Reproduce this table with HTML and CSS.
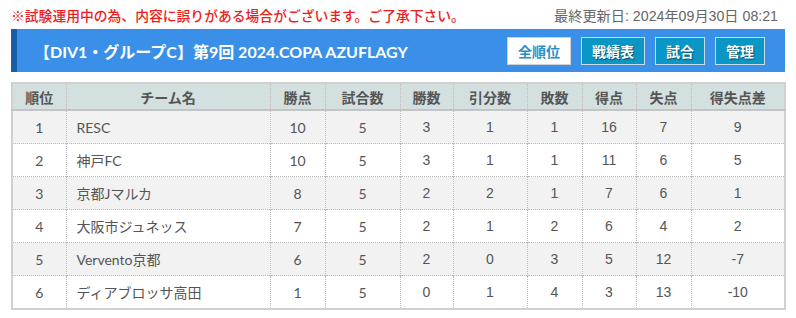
FILE: index.html
```html
<!DOCTYPE html>
<html lang="ja">
<head>
<meta charset="utf-8">
<link rel="stylesheet" href="styles.css">
</head>
<body>
<div class="page">
  <div class="topline">
    <span class="notice">※試験運用中の為、内容に誤りがある場合がございます。ご了承下さい。</span>
    <span class="updated">最終更新日: 2024年09月30日 08:21</span>
  </div>
  <div class="titlebar">
    <h1 class="title">【DIV1・グループC】第9回 2024.COPA AZUFLAGY</h1>
    <div class="btns">
      <a class="btn btn-active">全順位</a>
      <a class="btn">戦績表</a>
      <a class="btn">試合</a>
      <a class="btn">管理</a>
    </div>
  </div>
  <table class="standings">
    <colgroup>
      <col class="c1"><col class="c2"><col class="c3"><col class="c4"><col class="c5">
      <col class="c6"><col class="c7"><col class="c8"><col class="c9"><col class="c10">
    </colgroup>
    <thead>
      <tr><th>順位</th><th>チーム名</th><th>勝点</th><th>試合数</th><th>勝数</th><th>引分数</th><th>敗数</th><th>得点</th><th>失点</th><th>得失点差</th></tr>
    </thead>
    <tbody>
      <tr><td class="la">1</td><td class="name">RESC</td><td class="la">10</td><td class="la">5</td><td>3</td><td>1</td><td>1</td><td>16</td><td>7</td><td>9</td></tr>
      <tr><td class="la">2</td><td class="name">神戸FC</td><td class="la">10</td><td class="la">5</td><td>3</td><td>1</td><td>1</td><td>11</td><td>6</td><td>5</td></tr>
      <tr><td class="la">3</td><td class="name">京都Jマルカ</td><td class="la">8</td><td class="la">5</td><td>2</td><td>2</td><td>1</td><td>7</td><td>6</td><td>1</td></tr>
      <tr><td class="la">4</td><td class="name">大阪市ジュネッス</td><td class="la">7</td><td class="la">5</td><td>2</td><td>1</td><td>2</td><td>6</td><td>4</td><td>2</td></tr>
      <tr><td class="la">5</td><td class="name">Vervento京都</td><td class="la">6</td><td class="la">5</td><td>2</td><td>0</td><td>3</td><td>5</td><td>12</td><td>-7</td></tr>
      <tr><td class="la">6</td><td class="name">ディアブロッサ高田</td><td class="la">1</td><td class="la">5</td><td>0</td><td>1</td><td>4</td><td>3</td><td>13</td><td>-10</td></tr>
    </tbody>
  </table>
</div>
</body>
</html>
```
FILE: styles.css
```css
html, body {
  margin: 0;
  padding: 0;
  background: #fff;
}
body {
  font-family: Lato, "Noto Sans CJK JP", sans-serif;
  color: #555;
}
.page {
  padding: 0 11px;
}
.topline {
  display: flex;
  justify-content: space-between;
  align-items: center;
  height: 29px;
  padding-right: 7px;
}
.notice {
  color: #ee1c1c;
  font-size: 13.8px;
  font-weight: 500;
  font-family: "Noto Sans CJK JP", sans-serif;
}
.updated {
  color: #666;
  font-size: 14.2px;
  font-family: "Liberation Sans", "Noto Sans CJK JP", sans-serif;
}
.titlebar {
  display: flex;
  align-items: center;
  justify-content: space-between;
  height: 43px;
  background: #3a90e8;
  border-left: 6px solid #185ea6;
  padding: 0 20px 0 17px;
}
.title {
  margin: 0;
  color: #fff;
  font-size: 16px;
  font-weight: bold;
  font-family: Lato, "Noto Sans CJK JP", sans-serif;
}
.btns {
  display: flex;
  gap: 10px;
}
.btn {
  display: flex;
  align-items: center;
  justify-content: center;
  box-sizing: border-box;
  height: 28px;
  padding: 0 10px;
  background: #0b97c5;
  border: 1px solid #c9dbe6;
  color: #fff;
  font-weight: bold;
  font-size: 14px;
  font-family: "Noto Sans CJK JP", sans-serif;
  text-shadow: 1px 1px 1px rgba(0,0,0,0.5);
}
.btn-active {
  background: #fff;
  color: #2a8fc6;
  text-shadow: none;
  border-color: #d0d0d0;
}
.standings {
  margin-top: 10px;
  width: 773px;
  border-collapse: collapse;
  table-layout: fixed;
  border: 2px solid #d0d0d0;
  font-size: 14px;
}
.c1 { width: 54px; }
.c2 { width: 204px; }
.c3 { width: 55px; }
.c4 { width: 75px; }
.c5 { width: 53px; }
.c6 { width: 74px; }
.c7 { width: 55px; }
.c8 { width: 54px; }
.c9 { width: 55px; }
.c10 { width: 94px; }
.standings th {
  height: 25px;
  background: #d4e0e0;
  color: #555;
  font-weight: bold;
  font-size: 14px;
  font-family: "Noto Sans CJK JP", sans-serif;
  border-left: 1px dotted #bbb;
  border-bottom: 2px solid #c4c4c4;
  padding: 0;
  text-align: center;
}
.standings td {
  height: 32px;
  padding: 0;
  text-align: center;
  border-left: 1px dotted #bbb;
  border-top: 1px dotted #bbb;
  font-family: "Liberation Sans", "Noto Sans CJK JP", sans-serif;
  color: #555;
}
.standings td.la {
  font-family: Lato, "Noto Sans CJK JP", sans-serif;
}
.standings td.name {
  text-align: left;
  padding-left: 10px;
  font-family: Lato, "Noto Sans CJK JP", sans-serif;
}
.standings tbody tr:nth-child(odd) {
  background: #f2f2f2;
}
```
